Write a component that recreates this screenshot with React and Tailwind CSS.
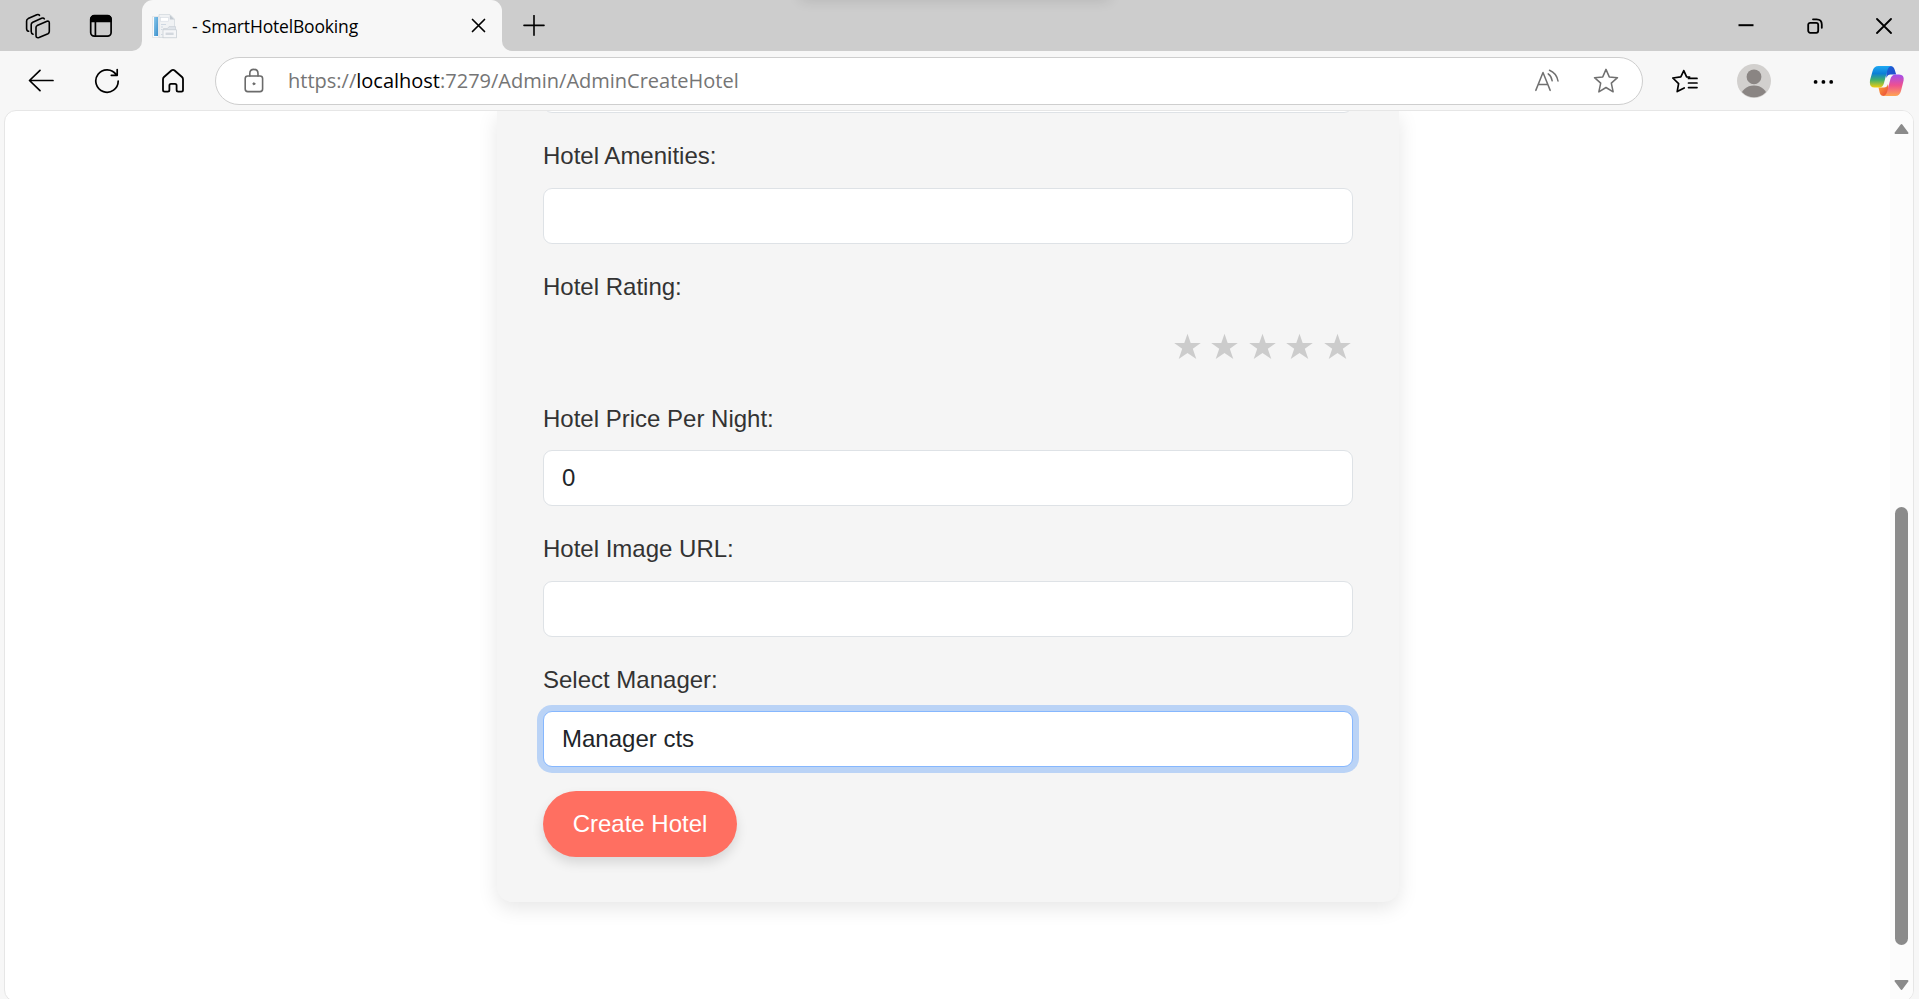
import React from "react";

const line = { fill: "none", stroke: "currentColor", strokeLinecap: "round", strokeLinejoin: "round" };
const starPath = "M12 1.3 L15 8.2 L22.6 8.9 L16.9 14 L18.6 22 L12 18 L5.4 22 L7.1 14 L1.4 8.9 L9 8.2 Z";

function TabStrip() {
  return (
    <header className="relative flex h-[51px] shrink-0 items-start overflow-hidden bg-[#cdcdcd] text-black">
      <div className="flex h-[51px] w-[132px] items-center">
        <svg className="ml-[25px] h-[26px] w-[26px]" viewBox="0 0 26 26" {...line} strokeWidth="1.6">
          <path d="M12.2 12.6 L22 8.3 Q24.3 7.6 24.3 10 V18.6 Q24.3 20 23 20.7 L14 24.6 Q11 25.4 11 22.4 V14.6 Q11 13.2 12.2 12.6 Z" />
          <path d="M8 21.3 Q6.2 20.8 6.2 18.6 V11.6 Q6.2 10 7.8 9.2 L16.6 5.2 Q18.6 4.6 19.3 5.8" />
          <path d="M3.6 18.3 Q1.6 17.8 1.6 15.4 V8 Q1.6 6.4 3.2 5.6 L11.8 1.7 Q13.6 1.1 14.5 2.3" />
        </svg>
        <svg className="ml-[38px] h-[24px] w-[24px]" viewBox="0 0 24 24" {...line} strokeWidth="1.7">
          <rect x="1.7" y="1.7" width="20.4" height="20.4" rx="3.6" />
          <path d="M2 7.4 V5 Q2 2 5 2 H19 Q22 2 22 5 V7.4 Z" fill="currentColor" />
          <path d="M6.4 8 V21.6" />
        </svg>
      </div>
      <div className="flex h-[51px] w-[10px] items-end bg-[#f7f7f7]"><div className="h-full w-full rounded-br-[10px] bg-[#cdcdcd]" /></div>
      <div className="h-[51px] w-[360px] bg-[#cdcdcd]">
        <div className="flex h-full items-center rounded-t-[11px] bg-[#f7f7f7]">
          <svg className="ml-[10px] h-[26px] w-[26px] shrink-0" viewBox="0 0 26 26">
            <defs>
              <linearGradient id="fav" x1="0" y1="0" x2="1" y2="1">
                <stop stopColor="#8cc9ec" />
                <stop offset="1" stopColor="#3a8fcb" />
              </linearGradient>
            </defs>
            <path d="M.5 3.5 H7 V24.5 H.5 Z" fill="#fafbfc" stroke="#dcdfe3" strokeWidth=".7" />
            <path d="M7 1.5 H18 L22.5 6 V24.5 H7 Z" fill="#f0f2f4" stroke="#d4dae0" strokeWidth=".8" />
            <path d="M17.8 1.8 V6.4 H22.4 Z" fill="#c3cad1" />
            <rect x="2" y="4" width="4" height="19" fill="url(#fav)" />
            <rect x="8.5" y="4.6" width="8" height="3.6" fill="#fff" stroke="#d5dbe3" strokeWidth=".6" />
            <path d="M9 11.5 H14 M9 14 H11 M9 16.5 H10.5 M9 21.5 H10.5" stroke="#cfd8e2" />
            <path d="M11.5 15.5 H15.5 L17 13.6 H23.5 V18 H11.5 Z" fill="#dfe4ea" stroke="#c9cfd5" strokeWidth=".7" />
            <rect x="11" y="16.8" width="13.6" height="8" fill="#f5f6f8" stroke="#c4cad0" strokeWidth=".7" />
            <rect x="13.6" y="19.6" width="8" height="2.4" fill="#d3d8de" />
          </svg>
          <span className="ml-[14px] w-[279px] shrink-0 whitespace-nowrap font-['Open_Sans','Noto_Sans',sans-serif] text-[17.5px] leading-6 tracking-[-0.17px]">- SmartHotelBooking</span>
          <svg className="h-[15px] w-[15px] shrink-0" viewBox="0 0 15 15" {...line} strokeWidth="1.7"><path d="M1.5 1.5 L13.5 13.5 M13.5 1.5 L1.5 13.5" /></svg>
        </div>
      </div>
      <div className="h-[51px] w-[10px] bg-[#f7f7f7]"><div className="h-full rounded-bl-[10px] bg-[#cdcdcd]" /></div>
      <div className="flex h-[51px] flex-1 items-center">
        <svg className="ml-[11px] h-[22px] w-[22px]" viewBox="0 0 22 22" {...line} strokeWidth="1.6"><path d="M11 .6 V20.2 M1 10.4 H21" /></svg>
        <div className="ml-auto flex items-center gap-[53px] pr-[27px]">
          <svg className="h-4 w-4" viewBox="0 0 16 16" {...line} strokeLinecap="butt" strokeWidth="2"><path d="M.5 7.2 H15.5" /></svg>
          <svg className="h-4 w-4" viewBox="0 0 16 16" {...line} strokeWidth="1.8">
            <rect x="1.2" y="4.8" width="10" height="10" rx="2" />
            <path d="M6 1.3 H9.6 Q14.8 1.3 14.8 6.5 V9.8" />
          </svg>
          <svg className="h-4 w-4" viewBox="0 0 16 16" {...line} strokeWidth="1.8"><path d="M1 1 L15 15 M15 1 L1 15" /></svg>
        </div>
      </div>
      <div className="absolute -top-[10px] left-[800px] h-[9px] w-[310px] rounded-full shadow-[0_0_14px_rgba(0,0,0,0.16)]" />
    </header>
  );
}

function CopilotIcon() {
  return (
    <svg className="ml-[34px] h-[32px] w-[36px]" viewBox="0 0 36 32">
      <defs>
        <linearGradient id="c1" x1="0" y1="0" x2="0" y2="1">
          <stop stopColor="#1fa9f3" /><stop offset=".35" stopColor="#0c7fd6" /><stop offset=".65" stopColor="#43b06a" /><stop offset="1" stopColor="#f6ce0c" />
        </linearGradient>
        <linearGradient id="c2" x1="0" y1="0" x2="0" y2="1">
          <stop stopColor="#a24fee" /><stop offset=".5" stopColor="#ee5091" /><stop offset="1" stopColor="#ffa552" />
        </linearGradient>
        <linearGradient id="c3" x1="0" y1="0" x2="1" y2="1">
          <stop stopColor="#1b63d8" /><stop offset="1" stopColor="#2349c9" />
        </linearGradient>
        <linearGradient id="c4" x1="0" y1="0" x2="1" y2="1">
          <stop stopColor="#ffab35" /><stop offset="1" stopColor="#e8403c" />
        </linearGradient>
      </defs>
      <path d="M17 1 H21.5 Q24.6 1 25.6 4.5 L27.2 9.6 H21.6 Q18.6 9.6 17.4 13 Z" fill="url(#c3)" />
      <path d="M9.5 22.5 H15 Q18 22.5 19 19 L20 26 L18.4 31 H14.6 Q11.6 31 10.8 28 Z" fill="url(#c4)" />
      <path d="M9.5 1 H22.5 Q19.5 1.4 18.3 5.5 L15 18 Q13.8 22.6 10 22.6 H5.5 Q-.4 22.6 1.2 14.5 L3.6 6 Q5 1 9.5 1 Z" fill="url(#c1)" />
      <path d="M26.5 31 H14 Q17 30.6 18.2 26.5 L21.4 14 Q22.8 9.5 26.4 9.5 H30 Q35.6 9.5 34.6 15.5 L32 26 Q30.6 31 26.5 31 Z" fill="url(#c2)" />
    </svg>
  );
}

function Toolbar() {
  return (
    <nav className="flex h-[59px] shrink-0 items-center bg-[#f7f7f7] text-black">
      <svg className="ml-[28px] h-[26px] w-[26px]" viewBox="0 0 26 26" {...line} strokeWidth="1.7"><path d="M12 2.3 L1.5 12.5 L12 22.7 M1.8 12.5 H25" /></svg>
      <svg className="ml-[40px] h-[26px] w-[26px]" viewBox="0 0 26 26" {...line} strokeWidth="1.7">
        <path d="M24.2 13 A11.2 11.2 0 1 1 22.3 6.8 M23.2 1.5 V7.3 H17.3" />
      </svg>
      <svg className="ml-[40px] h-[26px] w-[26px]" viewBox="0 0 26 26" {...line} strokeWidth="1.8">
        <path d="M3 11.2 Q3 10 4 9 L11.4 2.5 Q13 1.2 14.6 2.5 L22 9 Q23 10 23 11.2 V22 Q23 23.6 21.4 23.6 H18.2 Q16.6 23.6 16.6 22 V17.5 Q16.6 15.8 15 15.8 H11 Q9.4 15.8 9.4 17.5 V22 Q9.4 23.6 7.8 23.6 H4.6 Q3 23.6 3 22 Z" />
      </svg>
      <div className="ml-[29px] flex h-[48px] w-[1428px] items-center rounded-full border-[1.5px] border-[#cecece] bg-white">
        <svg className="ml-[28px] h-[26px] w-[20px] text-[#6b6b6b]" viewBox="0 0 20 26" {...line} strokeWidth="1.6">
          <rect x="1.2" y="8" width="17.4" height="15.6" rx="2.6" />
          <path d="M5.8 8 V5.5 Q5.8 1.4 9.9 1.4 Q14 1.4 14 5.5 V8" />
          <circle cx="9.9" cy="15.8" r="1" fill="currentColor" strokeWidth="1" />
        </svg>
        <span className="ml-[24px] mt-px whitespace-nowrap font-['Open_Sans','Noto_Sans',sans-serif] text-[20px] leading-7 text-[#757575]">
          https://<span className="text-black">localhost</span>:7279/Admin/AdminCreateHotel
        </span>
        <svg className="ml-auto h-[26px] w-[26px] text-[#707070]" viewBox="0 0 26 26" {...line} strokeWidth="1.5">
          <path d="M1.8 22.4 L9 4.5 L16.2 22.4 M4.4 16.5 H13.7" />
          <path d="M14.2 5.8 Q17.4 8 18.2 12.8 M15.5 2.2 Q22.7 5.2 24 13" />
        </svg>
        <svg className="ml-[33px] mr-[23.5px] h-[26px] w-[26px] text-[#707070]" viewBox="0 0 24 24" {...line} strokeWidth="1.4"><path d={starPath} /></svg>
      </div>
      <svg className="ml-[28px] h-[26px] w-[27px]" viewBox="0 0 27 26" {...line} strokeWidth="1.7">
        <path d="M18.6 9.2 L15.6 8.8 L12.8 2.6 L9.8 8.8 L1.8 10 L7.6 15.6 L6.2 23.6 L13.2 19.9" />
        <path d="M17.5 10.4 H26 M17.5 15 H26 M17.5 19.6 H26" />
      </svg>
      <svg className="ml-[39px] h-[34px] w-[34px]" viewBox="0 0 34 34">
        <defs><clipPath id="av"><circle cx="17" cy="17" r="16.3" /></clipPath></defs>
        <circle cx="17" cy="17" r="17" fill="#d2d0ce" />
        <g clipPath="url(#av)" fill="#8a8583">
          <circle cx="17" cy="12.8" r="7.4" />
          <ellipse cx="17" cy="33" rx="13.4" ry="11.4" />
        </g>
      </svg>
      <svg className="ml-[42px] h-[6px] w-[22px]" viewBox="0 0 22 6" fill="currentColor"><circle cx="2.6" cy="3.9" r="1.9" /><circle cx="10.4" cy="3.9" r="1.9" /><circle cx="18.2" cy="3.9" r="1.9" /></svg>
      <CopilotIcon />
    </nav>
  );
}

const labelText = "block h-9 text-[24px] leading-9 text-[#333333]";
const inputBox = "block h-[56px] w-full rounded-[9px] border border-[#dee2e6] bg-white px-[18px] text-[24px] text-[#212529] outline-none";

function HotelForm() {
  return (
    <form className="ml-[492px] flow-root h-[791px] w-[901.5px] rounded-b-[15px] bg-[#f5f5f5] px-[46px] shadow-[0_6px_20px_rgba(0,0,0,0.1)]" onSubmit={(e) => e.preventDefault()}>
      <input className={`${inputBox} -mt-[54px]`} />
      <label className={`${labelText} mt-[25px]`}>Hotel Amenities:</label>
      <input className={`${inputBox} mt-[14px]`} />
      <label className={`${labelText} mt-[25px]`}>Hotel Rating:</label>
      <div className="mt-[28px] flex h-[27px] justify-end gap-[10.5px] pr-[2px]">
        {[1, 2, 3, 4, 5].map((n) => (
          <svg key={n} className="h-[27px] w-[27px]" viewBox="0 0 27 27" fill="#cccccc">
            <path d="M13.5 .8 L16.7 10 H26.8 L18.8 15.8 L22.3 26 L13.5 20 L4.7 26 L8.2 15.8 L.2 10 H10.3 Z" />
          </svg>
        ))}
      </div>
      <label className={`${labelText} mt-[41px]`}>Hotel Price Per Night:</label>
      <input className={`${inputBox} mt-[13px]`} defaultValue="0" />
      <label className={`${labelText} mt-[25px]`}>Hotel Image URL:</label>
      <input className={`${inputBox} mt-[14px]`} />
      <label className={`${labelText} mt-[25px]`}>Select Manager:</label>
      <div className="mt-[13px] flex h-[56px] items-center rounded-[9px] border border-[#86b7fe] bg-white px-[18px] text-[24px] text-[#212529] shadow-[0_0_0_6px_rgba(13,110,253,0.25)]">Manager cts</div>
      <button className="mt-[24px] flex h-[66px] w-[194px] items-center justify-center rounded-full bg-[#ff6f61] text-[24px] text-white shadow-[0_6px_12px_rgba(0,0,0,0.12)]">Create Hotel</button>
    </form>
  );
}

export default function App() {
  return (
    <div className="flex h-[999px] w-[1919px] flex-col overflow-hidden bg-[#f7f7f7] font-['Liberation_Sans',Arial,sans-serif]">
      <TabStrip />
      <Toolbar />
      <main className="ml-[4px] flex h-[892px] w-[1910px] shrink-0 overflow-hidden rounded-[12px] border border-[#e6e6e6] bg-white">
        <section className="w-[1885px] shrink-0">
          <HotelForm />
        </section>
        <aside className="flex flex-1 flex-col items-center bg-[#fcfcfc] text-[#8b8b8b]">
          <svg className="mt-[12px] h-[12px] w-[15px] shrink-0" viewBox="0 0 15 12" fill="currentColor" stroke="currentColor" strokeWidth="2" strokeLinejoin="round"><path d="M7.5 2 L13.5 10 H1.5 Z" /></svg>
          <div className="mt-[372px] h-[438px] w-[13px] shrink-0 rounded-full bg-[#8b8b8b]" />
          <svg className="mt-[34px] h-[12px] w-[15px] shrink-0" viewBox="0 0 15 12" fill="currentColor" stroke="currentColor" strokeWidth="2" strokeLinejoin="round"><path d="M7.5 10 L13.5 2 H1.5 Z" /></svg>
        </aside>
      </main>
    </div>
  );
}
